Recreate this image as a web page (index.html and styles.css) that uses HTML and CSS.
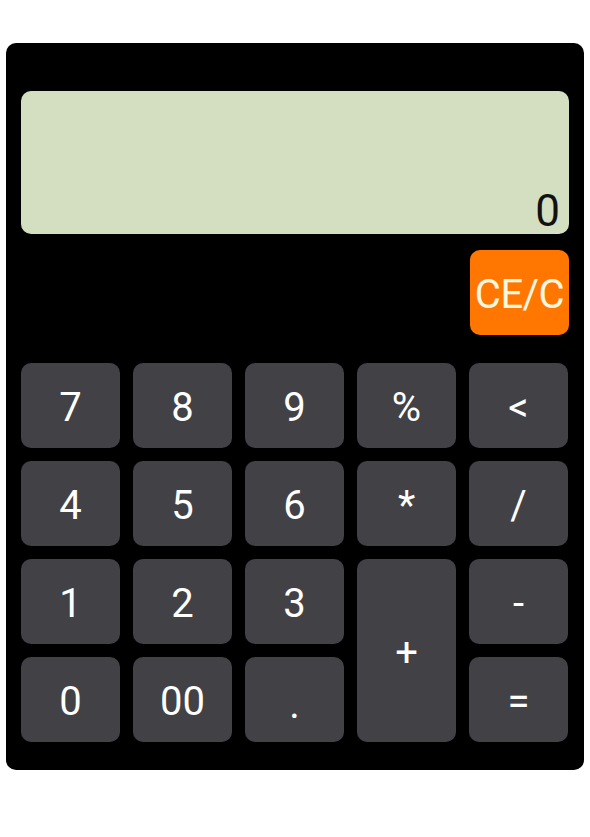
FILE: index.html
```html
<!DOCTYPE html>
<html>
<head>
<meta charset="utf-8">
<link rel="stylesheet" href="styles.css">
</head>
<body>
<div class="calc">
  <div class="display"><span class="value">0</span></div>
  <div class="clear-row"><button class="key clear">CE/C</button></div>
  <div class="keys">
    <button class="key">7</button>
    <button class="key">8</button>
    <button class="key">9</button>
    <button class="key">%</button>
    <button class="key">&lt;</button>
    <button class="key">4</button>
    <button class="key">5</button>
    <button class="key">6</button>
    <button class="key">*</button>
    <button class="key">/</button>
    <button class="key">1</button>
    <button class="key">2</button>
    <button class="key">3</button>
    <button class="key plus">+</button>
    <button class="key">-</button>
    <button class="key">0</button>
    <button class="key">00</button>
    <button class="key dot">.</button>
    <button class="key">=</button>
  </div>
</div>
</body>
</html>
```
FILE: styles.css
```css
html, body {
  margin: 0;
  padding: 0;
  background: #ffffff;
}
body {
  font-family: Roboto, "Noto Sans", sans-serif;
  padding: 43px 6px 0 6px;
}
.calc {
  width: 578px;
  box-sizing: border-box;
  background: #000000;
  border-radius: 10px;
  padding: 48px 15px 28px 15px;
}
.display {
  height: 143px;
  background: #d4dec0;
  border-radius: 10px;
  display: flex;
  align-items: flex-end;
  justify-content: flex-end;
  padding: 0 9px 1px 0;
  box-sizing: border-box;
}
.value {
  font-size: 44px;
  color: #111;
  line-height: 1;
}
.clear-row {
  display: flex;
  justify-content: flex-end;
  margin-top: 16px;
}
.key {
  border: none;
  margin: 0;
  padding: 3px 0 0 0;
  box-sizing: border-box;
  background: #414146;
  color: #ffffff;
  border-radius: 10px;
  font-family: Roboto, "Noto Sans", sans-serif;
  font-size: 40px;
  height: 85px;
  display: flex;
  align-items: center;
  justify-content: center;
}
.clear {
  width: 99px;
  background: #ff7700;
  color: #fff7e0;
  font-size: 40px;
  white-space: nowrap;
  letter-spacing: -0.5px;
}
.keys {
  margin-top: 28px;
  display: grid;
  grid-template-columns: repeat(5, 99px);
  grid-auto-rows: 85px;
  column-gap: 13px;
  row-gap: 13px;
}
.plus {
  grid-row: span 2;
  height: auto;
}
.dot {
  align-items: flex-end;
  padding-bottom: 14px;
}
```
